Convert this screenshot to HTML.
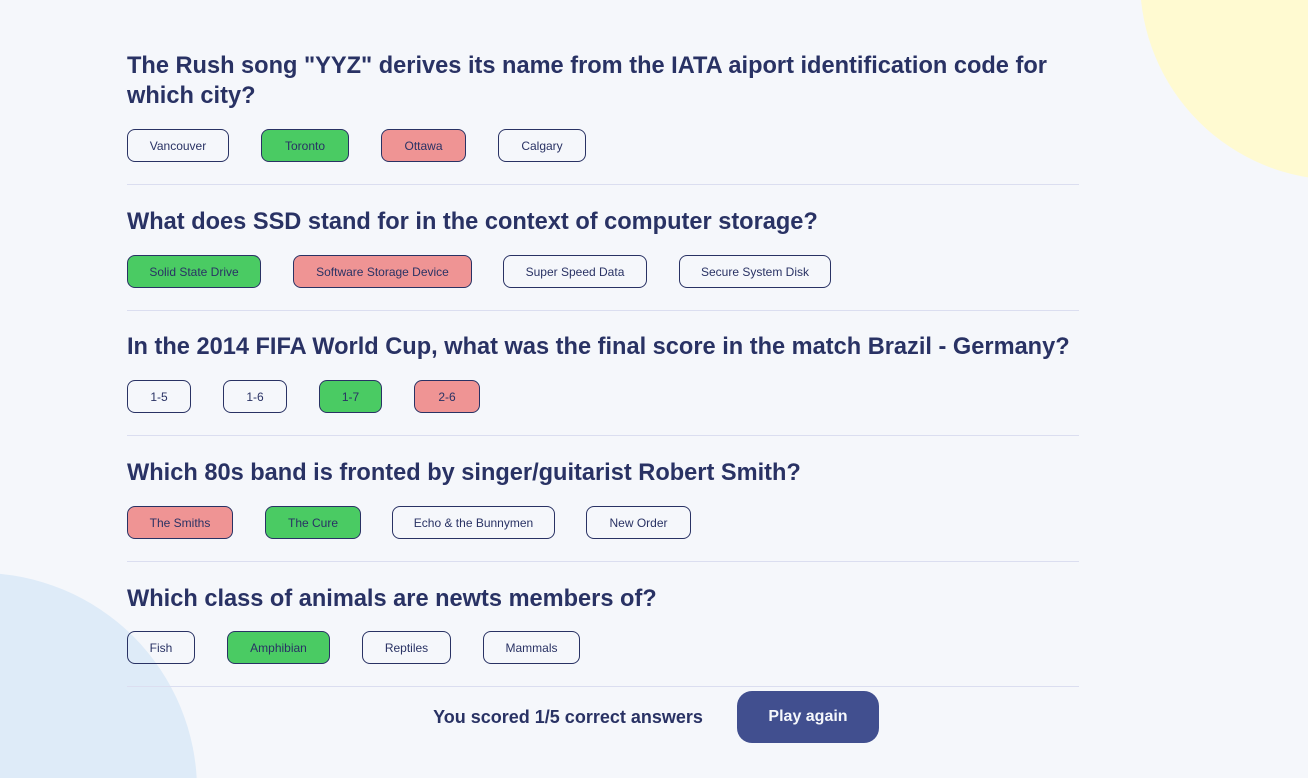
<!DOCTYPE html>
<html style="width:1308px;height:778px;overflow:hidden"><head><meta charset="utf-8"><style>
*{margin:0;padding:0;box-sizing:border-box}
body{width:1308px;height:778px;background:#F5F7FB;position:relative;overflow:hidden;font-family:"Liberation Sans",sans-serif;color:#293264}
.clip{position:absolute;left:0;top:0;width:1308px;height:778px;overflow:hidden}
.blob{position:absolute;border-radius:50%}
h2{position:absolute;left:127px;font-size:23.6px;font-weight:700;line-height:30px;white-space:nowrap;color:#293264}
.b{position:absolute;height:33px;border:1px solid #293264;border-radius:8px;font-size:12px;display:flex;align-items:center;justify-content:center;color:#293264}
.g{background:#4ACB63}.r{background:#EF9494}
.hr{position:absolute;left:127px;width:952px;height:1px;background:#DBDEF0}
</style></head><body>
<div class="clip">
<div class="blob" style="left:1140px;top:-220px;width:400px;height:400px;background:#FFFAD1"></div>
<div class="blob" style="left:-237px;top:573px;width:434px;height:434px;background:#DEEBF8"></div>
</div>

<h2 style="top:51px">The Rush song "YYZ" derives its name from the IATA aiport identification code for<br>which city?</h2>
<div class="b" style="left:127px;top:129px;width:102px">Vancouver</div>
<div class="b g" style="left:261px;top:129px;width:88px">Toronto</div>
<div class="b r" style="left:381px;top:129px;width:85px">Ottawa</div>
<div class="b" style="left:498px;top:129px;width:88px">Calgary</div>
<div class="hr" style="top:184px"></div>

<h2 style="top:207px">What does SSD stand for in the context of computer storage?</h2>
<div class="b g" style="left:127px;top:255px;width:134px">Solid State Drive</div>
<div class="b r" style="left:293px;top:255px;width:179px">Software Storage Device</div>
<div class="b" style="left:503px;top:255px;width:144px">Super Speed Data</div>
<div class="b" style="left:679px;top:255px;width:152px">Secure System Disk</div>
<div class="hr" style="top:310px"></div>

<h2 style="top:332px">In the 2014 FIFA World Cup, what was the final score in the match Brazil - Germany?</h2>
<div class="b" style="left:127px;top:380px;width:64px">1-5</div>
<div class="b" style="left:223px;top:380px;width:64px">1-6</div>
<div class="b g" style="left:319px;top:380px;width:63px">1-7</div>
<div class="b r" style="left:414px;top:380px;width:66px">2-6</div>
<div class="hr" style="top:435px"></div>

<h2 style="top:458px">Which 80s band is fronted by singer/guitarist Robert Smith?</h2>
<div class="b r" style="left:127px;top:506px;width:106px">The Smiths</div>
<div class="b g" style="left:265px;top:506px;width:96px">The Cure</div>
<div class="b" style="left:392px;top:506px;width:163px">Echo &amp; the Bunnymen</div>
<div class="b" style="left:586px;top:506px;width:105px">New Order</div>
<div class="hr" style="top:561px"></div>

<h2 style="top:584px">Which class of animals are newts members of?</h2>
<div class="b" style="left:127px;top:631px;width:68px">Fish</div>
<div class="b g" style="left:227px;top:631px;width:103px">Amphibian</div>
<div class="b" style="left:362px;top:631px;width:89px">Reptiles</div>
<div class="b" style="left:483px;top:631px;width:97px">Mammals</div>
<div class="hr" style="top:686px"></div>

<div style="position:absolute;left:418px;top:707px;font-size:18px;font-weight:700;white-space:nowrap;width:300px;text-align:center">You scored 1/5 correct answers</div>
<div style="position:absolute;left:737px;top:691px;width:142px;height:52px;border-radius:15px;background:#414F8F;color:#F5F7FB;font-size:16px;font-weight:700;display:flex;align-items:center;justify-content:center">Play again</div>
</body></html>
